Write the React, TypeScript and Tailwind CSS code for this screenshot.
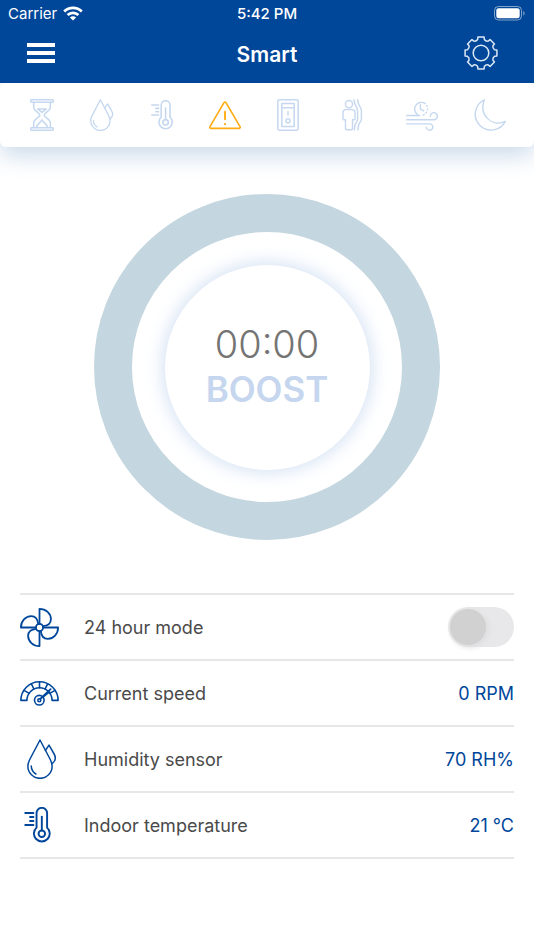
import type { JSX, ReactNode } from 'react';
import { useState } from 'react';

type IconProps = {
    className?: string;
};

type ShapeProps = IconProps & {
    viewBox: string;
    stroke?: number;
    children: ReactNode;
};

function Shape({ viewBox, stroke = 1.5, className, children }: ShapeProps): JSX.Element {
    return (
        <svg
            viewBox={viewBox}
            className={className}
            fill="none"
            stroke="currentColor"
            strokeWidth={stroke}
            strokeLinecap="round"
            strokeLinejoin="round"
            aria-hidden="true"
        >
            {children}
        </svg>
    );
}

function WifiIcon({ className }: IconProps): JSX.Element {
    return (
        <svg viewBox="0 0 20 15" className={className} fill="none" stroke="currentColor" strokeWidth="2.8" aria-hidden="true">
            <path d="M1.2 5.4a12.6 12.6 0 0 1 17.6 0" />
            <path d="M4.6 9a7.8 7.8 0 0 1 10.8 0" />
            <path d="M10 14.6 6.9 11.5a4.4 4.4 0 0 1 6.2 0z" fill="currentColor" stroke="none" />
        </svg>
    );
}

function BatteryIcon({ className }: IconProps): JSX.Element {
    return (
        <svg viewBox="0 0 32 15" className={className} aria-hidden="true">
            <rect x="0.5" y="0.5" width="27" height="13.5" rx="4" fill="none" stroke="currentColor" opacity="0.5" />
            <rect x="2.3" y="2.3" width="23.4" height="10" rx="2.2" fill="currentColor" />
            <path d="M29.3 5v4.6c1.8-.6 1.8-4 0-4.6z" fill="currentColor" opacity="0.5" />
        </svg>
    );
}

// One outline point of the gear, in polar form around its centre
function gearPoint(radius: number, degrees: number): string {
    const angle = (degrees * Math.PI) / 180;

    return `${(17 + radius * Math.sin(angle)).toFixed(2)} ${(17 - radius * Math.cos(angle)).toFixed(2)}`;
}

const gearOutline = `M${[0, 45, 90, 135, 180, 225, 270, 315]
    .map(
        (a) =>
            `${gearPoint(16.2, a - 11)}L${gearPoint(16.2, a + 11)}L${gearPoint(13.9, a + 14)}Q${gearPoint(12.4, a + 22.5)} ${gearPoint(13.9, a + 31)}`,
    )
    .join('L')}Z`;

function GearIcon({ className }: IconProps): JSX.Element {
    return (
        <Shape viewBox="0 0 34 34" className={className} stroke={1.5}>
            <path d={gearOutline} />
            <circle cx="17" cy="17" r="7.8" />
        </Shape>
    );
}

function HourglassIcon({ className }: IconProps): JSX.Element {
    return (
        <Shape viewBox="0 0 24 32" className={className}>
            <rect x="0.7" y="0.7" width="22.6" height="2.6" rx="1" />
            <rect x="0.7" y="28.7" width="22.6" height="2.6" rx="1" />
            <path d="M3.7 3.5v4.7c0 4 6.2 5.3 6.2 7.8s-6.2 3.8-6.2 7.8v4.7" />
            <path d="M20.3 3.5v4.7c0 4-6.2 5.3-6.2 7.8s6.2 3.8 6.2 7.8v4.7" />
            <path d="M7.6 10h8.8L12 13.4z" />
            <path d="M6.4 28.3c.8-3.2 3.6-4.4 5.6-7.4 2 3 4.8 4.2 5.6 7.4" />
        </Shape>
    );
}

function DropsIcon({ className, stroke = 1.3 }: IconProps & { stroke?: number }): JSX.Element {
    return (
        <Shape viewBox="0 0 24 32" className={className} stroke={stroke}>
            <path d="M10.4.8 2.6 15.6C1.3 18 .7 19.8.7 21.8a9.7 9.7 0 0 0 19.4 0c0-2-.6-3.8-1.9-6.2z" />
            <path d="M14.7 9.2 17.6 4.9l4 6.9c1.4 2.5 1.5 5.7-1.4 7.8" />
            <path d="M3.4 21.6c.1 2.9 1.4 5 3.7 6.4" />
        </Shape>
    );
}

function ThermometerIcon({ className }: IconProps): JSX.Element {
    return (
        <Shape viewBox="0 0 22 30" className={className} stroke={1.6}>
            <path d="M10.2 17.2V5.1a4.4 4.4 0 0 1 8.8 0v12.1a6.6 6.6 0 1 1-8.8 0z" />
            <circle cx="14.6" cy="22.3" r="2.7" />
            <path d="M14.6 8v11.4" />
            <path d="M.8 5h6.8M4.8 8.4h2.8M4.8 11.7h2.8M.8 15h6.8" />
        </Shape>
    );
}

function WarningIcon({ className }: IconProps): JSX.Element {
    return (
        <Shape viewBox="0 0 32 32" className={className} stroke={1.6}>
            <path d="M15 3.6a1.2 1.2 0 0 1 2 0l14 24.1a1.1 1.1 0 0 1-1 1.7H2a1.1 1.1 0 0 1-1-1.7z" />
            <path d="M16 12.6v7.6" strokeWidth="1.9" />
            <path d="M16 25v.2" strokeWidth="2.2" />
        </Shape>
    );
}

function SwitchIcon({ className }: IconProps): JSX.Element {
    return (
        <Shape viewBox="0 0 22 32" className={className}>
            <rect x="0.8" y="0.8" width="20.4" height="30.4" rx="1.6" />
            <rect x="4.8" y="4.6" width="12.4" height="22.8" />
            <path d="M4.8 8.7h12.4M11 12.5v3.6" />
            <circle cx="11" cy="21.8" r="2.1" />
        </Shape>
    );
}

function PresenceIcon({ className }: IconProps): JSX.Element {
    return (
        <Shape viewBox="0 0 34 32" className={className} stroke={1.4}>
            <circle cx="14" cy="5.1" r="3.6" />
            <path d="M11 10.6h6a3 3 0 0 1 3 3v6.2q0 .9-.9.9h-1.6v8.8q0 1.3-1.3 1.3h-4.4q-1.3 0-1.3-1.3v-8.8H8.9q-.9 0-.9-.9v-6.2a3 3 0 0 1 3-3z" />
            <path d="M19 .8c.2 1.8.5 3.5 1.3 4.9 1.8 3 2.3 4 2.3 6.6v7.9c0 2.2-2 3.6-2.5 5.8-.3 1.6-.6 3.2-.8 5" />
            <path d="M22.6.8c.2 1.8.5 3.5 1.3 4.9 1.8 3 2.5 4 2.5 6.6v7.9c0 2.2-2.2 3.6-2.7 5.8-.3 1.6-.6 3.2-.8 5" />
        </Shape>
    );
}

function AirflowIcon({ className }: IconProps): JSX.Element {
    return (
        <Shape viewBox="0 0 32 32" className={className} stroke={1.4}>
            <path d="M11.6 15.7a6.7 6.7 0 1 1 7.6-11.1" />
            <path d="M20.8 6.6a6.7 6.7 0 0 1-5.4 9.8" strokeDasharray="1 2.4" />
            <path d="M14.4 5.7v4.4l3.3 1.7" />
            <path d="M.7 16.5h13M.7 20.8h27a3.6 3.6 0 1 0-3.5-3.6M.7 24.9h22.8a3.2 3.2 0 1 1-3.1 3.2" />
        </Shape>
    );
}

function MoonIcon({ className }: IconProps): JSX.Element {
    return (
        <Shape viewBox="0 0 32 32" className={className} stroke={1.4}>
            <path d="M10.3.8A15.9 15.9 0 1 0 31.3 22.4C18 28.6 4.6 16 10.3.8z" />
        </Shape>
    );
}

function FanIcon({ className }: IconProps): JSX.Element {
    const blade = 'M19.5 15.9V.9C26 .9 30.9 5.6 30.9 11.2c0 3.6-2.8 6.5-8 7';

    return (
        <Shape viewBox="0 0 39 39" className={className} stroke={1.8}>
            <circle cx="19.5" cy="19.5" r="3.6" />
            <path d={blade} />
            <path d={blade} transform="rotate(90 19.5 19.5)" />
            <path d={blade} transform="rotate(180 19.5 19.5)" />
            <path d={blade} transform="rotate(270 19.5 19.5)" />
        </Shape>
    );
}

function GaugeIcon({ className }: IconProps): JSX.Element {
    return (
        <Shape viewBox="0 0 39 25" className={className} stroke={1.6}>
            <path d="M.9 19.4a18.6 18.6 0 0 1 37.2 0h-6a12.6 12.6 0 0 0-25.2 0z" />
            <path d="M4 9.4 9.2 12.4M11.4 2.8 13.9 8M19.5.9v5.8M27.6 2.8 25.1 8M35 9.4l-5.2 3" />
            <circle cx="19.3" cy="19.2" r="4.8" />
            <circle cx="19.3" cy="19.2" r="1.5" />
            <path d="M20.2 18 30.6 8.2M22.6 16.2 29.4 10.8" strokeWidth="1.8" />
        </Shape>
    );
}

const modes = [
    { name: 'Timer', icon: <HourglassIcon className="h-8 w-6" /> },
    { name: 'Humidity', icon: <DropsIcon className="h-8 w-6" /> },
    { name: 'Temperature', icon: <ThermometerIcon className="h-[30px] w-[22px]" /> },
    { name: 'Alarm', icon: <WarningIcon className="size-8" />, active: true },
    { name: 'Switch', icon: <SwitchIcon className="h-8 w-[22px]" /> },
    { name: 'Presence', icon: <PresenceIcon className="h-8 w-[34px]" /> },
    { name: 'Airflow', icon: <AirflowIcon className="size-8" /> },
    { name: 'Night', icon: <MoonIcon className="size-8" /> },
];

const readings = [
    { label: 'Current speed', value: '0 RPM', icon: <GaugeIcon className="h-[25px] w-[39px]" /> },
    { label: 'Humidity sensor', value: '70 RH%', icon: <DropsIcon className="ml-1 h-10 w-[30px]" stroke={1.2} /> },
    { label: 'Indoor temperature', value: '21 °C', icon: <ThermometerIcon className="mr-1 h-9 w-[27px]" /> },
];

function Header(): JSX.Element {
    return (
        <header className="relative z-10 bg-[#004799] text-white">
            <div className="grid h-7 grid-cols-3 items-center px-2 text-[15px]">
                <div className="flex items-center gap-[6px]">
                    <span>Carrier</span>
                    <WifiIcon className="mb-[2px] h-[15px] w-5" />
                </div>
                <span className="text-center font-medium">5:42 PM</span>
                <BatteryIcon className="mb-[2px] h-[15px] w-8 justify-self-end" />
            </div>
            <div className="grid h-[55px] grid-cols-3 items-center px-[27px] pb-[6px]">
                <button type="button" aria-label="Menu" className="flex flex-col gap-1 justify-self-start">
                    <span className="h-1 w-7 bg-white" />
                    <span className="h-1 w-7 bg-white" />
                    <span className="h-1 w-7 bg-white" />
                </button>
                <h1 className="pt-1 text-center text-[21px] font-semibold">Smart</h1>
                <button type="button" aria-label="Settings" className="mr-[9px] justify-self-end text-[#dce8f5]">
                    <GearIcon className="size-[34px]" />
                </button>
            </div>
        </header>
    );
}

export default function App(): JSX.Element {
    const [allDay, setAllDay] = useState(false);

    return (
        <div className="min-h-screen bg-white font-['Inter',sans-serif]">
            <Header />

            <nav className="flex h-16 items-center justify-between rounded-md bg-white pr-7 pl-[30px] shadow-[0_8px_24px_#c9d9ea]">
                {modes.map((mode) => (
                    <button
                        key={mode.name}
                        type="button"
                        aria-label={mode.name}
                        className={mode.active ? 'text-[#ffab13]' : 'text-[#c5d8ef]'}
                    >
                        {mode.icon}
                    </button>
                ))}
            </nav>

            <main className="px-5 pt-[47px]">
                <div className="mx-auto flex size-[346px] items-center justify-center rounded-full border-[38px] border-[#c4d6df]">
                    <button
                        type="button"
                        className="flex size-[205px] flex-col items-center justify-center rounded-full bg-white shadow-[0_0_20px_#c9daf0]"
                    >
                        <span className="text-[38px] leading-[45px] font-light text-[#747474]">00:00</span>
                        <span className="text-[35px] leading-[45px] font-semibold text-[#c5d6ee]">BOOST</span>
                    </button>
                </div>

                <ul className="mt-[53px] border-t-2 border-[#e7e7e7] text-[18px] text-[#4a4a4a]">
                    <li className="flex h-[66px] items-center border-b-2 border-[#e7e7e7]">
                        <span className="flex w-16 text-[#00479b]">
                            <FanIcon className="size-[39px]" />
                        </span>
                        <label htmlFor="all-day" className="flex-1">
                            24 hour mode
                        </label>
                        <input
                            id="all-day"
                            type="checkbox"
                            role="switch"
                            checked={allDay}
                            onChange={(e) => setAllDay(e.target.checked)}
                            className="flex h-10 w-[66px] appearance-none items-center rounded-full bg-[#e8e8ea] px-[2px] before:size-9 before:rounded-full before:bg-[#d1d1d1] before:shadow-[2px_2px_6px_#dcdcde] checked:justify-end checked:bg-[#00479b]"
                        />
                    </li>
                    {readings.map((reading) => (
                        <li key={reading.label} className="flex h-[66px] items-center border-b-2 border-[#e7e7e7]">
                            <span className="flex w-16 text-[#00479b]">
                                <span className="flex w-[39px] justify-center">{reading.icon}</span>
                            </span>
                            <span className="flex-1">{reading.label}</span>
                            <span className="text-[#00479b]">{reading.value}</span>
                        </li>
                    ))}
                </ul>
            </main>
        </div>
    );
}
